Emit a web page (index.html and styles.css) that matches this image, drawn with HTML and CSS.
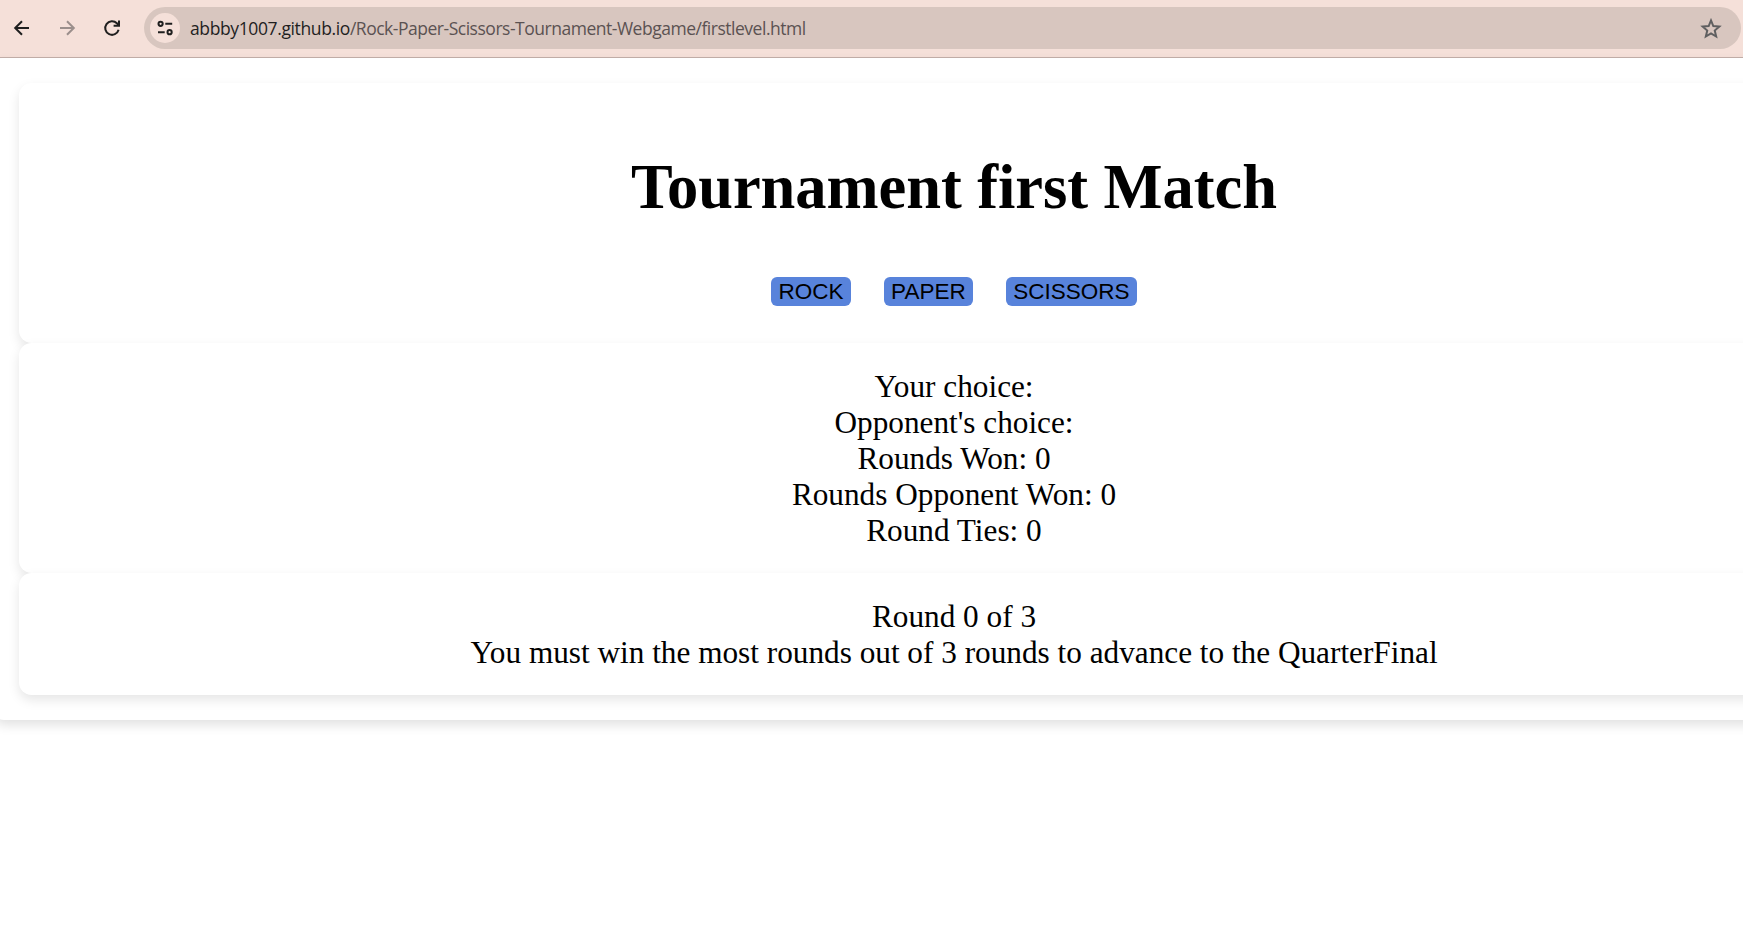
FILE: index.html
```html
<!DOCTYPE html>
<html lang="en">
<head>
<meta charset="utf-8">
<title>Rock Paper Scissors Tournament</title>
<link rel="stylesheet" href="styles.css">
</head>
<body>
<header class="toolbar">
  <nav class="nav">
    <svg class="icon" viewBox="0 0 20 20"><path d="M17 10H3.5M10 3.2L3.2 10L10 16.8"/></svg>
    <svg class="icon icon-muted" viewBox="0 0 20 20"><path d="M3 10H16.5M10 3.2L16.8 10L10 16.8"/></svg>
    <svg class="icon" viewBox="0 0 20 20"><path d="M16.6 11.8A6.8 6.8 0 1 1 14.9 5.3L16.5 7"/><path d="M17 2.5V7.8H11.6"/></svg>
  </nav>
  <div class="address">
    <span class="site-info">
      <svg class="tune" viewBox="0 0 18 18"><circle cx="4.6" cy="4.8" r="2.1"/><path d="M9.3 4.8H16.2M2 13.2H8.7"/><circle cx="13.6" cy="13.2" r="2.1"/></svg>
    </span>
    <span class="url"><span class="host">abbby1007.github.io</span>/Rock-Paper-Scissors-Tournament-Webgame/firstlevel.html</span>
    <svg class="star" viewBox="0 0 20 20"><path d="M10 2.2L12.1 7.3L17.6 7.8L13.4 11.4L14.7 16.8L10 13.9L5.3 16.8L6.6 11.4L2.4 7.8L7.9 7.3Z"/></svg>
  </div>
</header>
<main class="game">
  <section class="card match">
    <h1 class="title">Tournament first Match</h1>
    <div class="choices">
      <button class="choice">ROCK</button>
      <button class="choice">PAPER</button>
      <button class="choice">SCISSORS</button>
    </div>
  </section>
  <section class="card">
    <div>Your choice:</div>
    <div>Opponent's choice:</div>
    <div>Rounds Won: 0</div>
    <div>Rounds Opponent Won: 0</div>
    <div>Round Ties: 0</div>
  </section>
  <section class="card">
    <div>Round 0 of 3</div>
    <div>You must win the most rounds out of 3 rounds to advance to the QuarterFinal</div>
  </section>
</main>
</body>
</html>
```
FILE: styles.css
```css
* { box-sizing: border-box; }
body {
  margin: 0;
  height: 939px;
  overflow: hidden;
  background: #fff;
}
.toolbar {
  display: flex;
  align-items: center;
  height: 58px;
  padding: 0 2px 1px 12px;
  background: #f5e0d9;
  border-bottom: 1px solid #c4b0aa;
}
.nav { display: flex; gap: 25px; width: 132px; }
.icon {
  width: 20px;
  height: 20px;
  fill: none;
  stroke: #1f1f1f;
  stroke-width: 2;
}
.icon-muted { stroke: #9b8f8c; }
.address {
  display: flex;
  align-items: center;
  flex: 1;
  height: 42px;
  padding: 0 19px 0 6px;
  border-radius: 21px;
  background: #d8c6bf;
}
.site-info {
  display: grid;
  place-items: center;
  width: 30px;
  height: 30px;
  margin-right: 10px;
  border-radius: 50%;
  background: #f5e0d9;
}
.tune { width: 18px; height: 18px; fill: none; stroke: #1f1f1f; stroke-width: 2; }
.url {
  flex: 1;
  font: 400 17.5px "Open Sans", "Noto Sans", sans-serif;
  letter-spacing: -0.48px;
  color: #5b5252;
  white-space: nowrap;
}
.host { color: #1f1f1f; letter-spacing: -0.38px; }
.star { width: 22px; height: 22px; margin-top: 1px; fill: none; stroke: #5f5f60; stroke-width: 1.8; }
.game {
  width: 1920px;
  margin-left: -6px;
  padding: 25px;
  border-radius: 10px;
  box-shadow: 0 5px 12px rgba(0, 0, 0, 0.12);
}
.card {
  padding: 26px 25px 24px;
  border-radius: 12.5px;
  background: #fff;
  box-shadow: 0 5px 12px rgba(0, 0, 0, 0.1);
  font: 31.25px/36px "Liberation Serif", serif;
  text-align: center;
  color: #000;
}
.match { height: 260px; }
.title {
  margin: 42px 0 54px;
  font-size: 62.5px;
  line-height: 72px;
  letter-spacing: -0.05px;
}
.choices { display: flex; justify-content: center; gap: 32.8px; }
.choice {
  height: 29px;
  padding: 0 7.4px;
  border: 0;
  border-radius: 6px;
  background: #5883db;
  font: 22.5px/26px "Liberation Sans", sans-serif;
  color: #000;
}
```
